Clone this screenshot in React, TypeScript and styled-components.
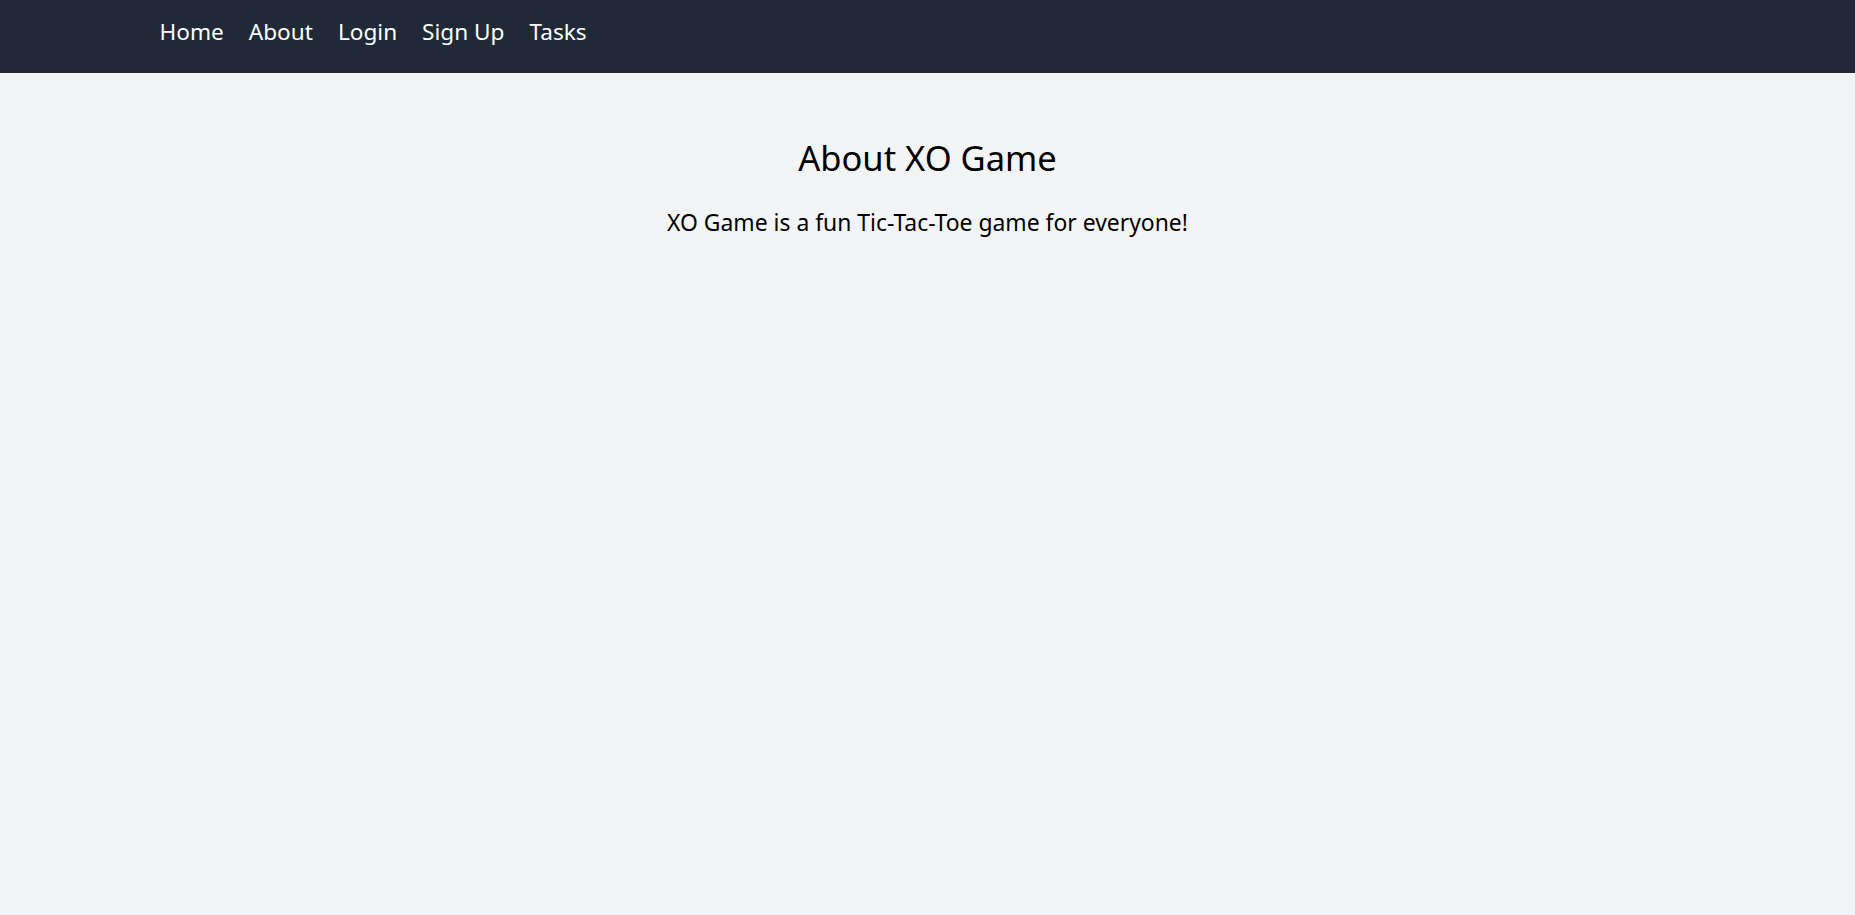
import React from "react";
import styled, { createGlobalStyle } from "styled-components";

const GlobalStyle = createGlobalStyle`
  html, body {
    margin: 0;
    padding: 0;
  }
  body {
    background: #f3f4f6;
    font-family: "Noto Sans", "Open Sans", sans-serif;
    color: #000;
    min-height: 100vh;
  }
`;

const NavBar = styled.nav`
  background: #1f2937;
  height: 73px;
  box-sizing: border-box;
  padding-top: 16px;
`;

const NavInner = styled.ul`
  max-width: 1536px;
  margin: 0 auto;
  padding: 0;
  list-style: none;
  display: flex;
  gap: 25px;
`;

const NavLink = styled.a`
  color: #ffffff;
  text-decoration: none;
  font-size: 22.6px;
  line-height: normal;
  cursor: pointer;
`;

const Main = styled.main`
  display: flex;
  flex-direction: column;
  align-items: center;
  padding-top: 61px;
`;

const Title = styled.h1`
  margin: 0;
  font-size: 34.5px;
  font-weight: 400;
  line-height: normal;
`;

const Lead = styled.p`
  margin: 26px 0 0;
  font-size: 22.9px;
  line-height: normal;
`;

const links = ["Home", "About", "Login", "Sign Up", "Tasks"];

export default function App() {
  return (
    <>
      <GlobalStyle />
      <NavBar>
        <NavInner>
          {links.map((l) => (
            <li key={l}>
              <NavLink href="#">{l}</NavLink>
            </li>
          ))}
        </NavInner>
      </NavBar>
      <Main>
        <Title>About XO Game</Title>
        <Lead>XO Game is a fun Tic-Tac-Toe game for everyone!</Lead>
      </Main>
    </>
  );
}
